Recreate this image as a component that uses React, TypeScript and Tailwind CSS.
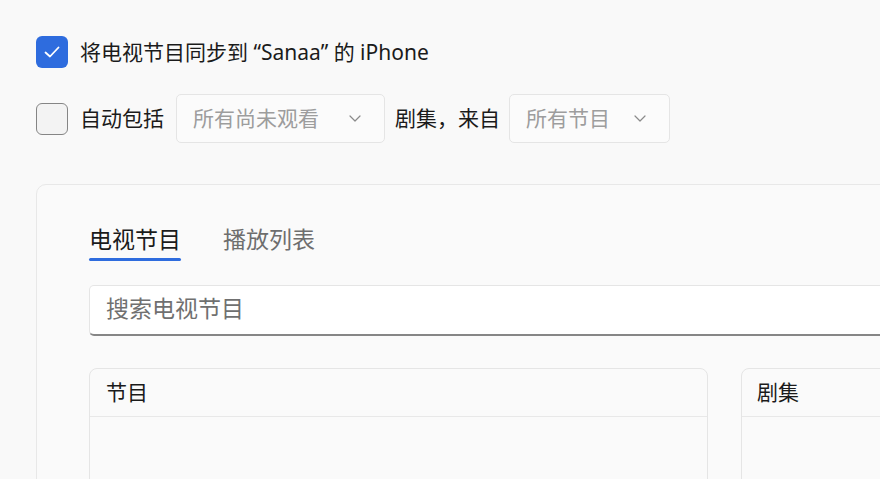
import React from 'react';

// Sync settings pane: checkbox rows, dropdowns, and the tabbed picker card
function Chevron() {
  return (
    <svg width="12" height="7" viewBox="0 0 12 7" fill="none">
      <path d="M1 1l5 5 5-5" stroke="#8a8a8a" strokeWidth="1.2" strokeLinecap="round" strokeLinejoin="round" />
    </svg>
  );
}

function Dropdown({ label, width }: { label: string; width: string }) {
  return (
    <div
      className={`${width} h-[49px] rounded-[5px] border border-[#e5e5e5] bg-[#fbfbfb] flex items-center justify-between pl-[16px] pr-[23px] text-[21px] text-[#9d9d9d]`}
    >
      <span>{label}</span>
      <Chevron />
    </div>
  );
}

export default function App() {
  return (
    <div className="w-[880px] h-[479px] overflow-hidden bg-[#f9f9f9] pl-[36px] pt-[36px] font-['Noto_Sans','Noto_Sans_CJK_SC',sans-serif] text-[#1b1b1b]">
      {/* sync toggle */}
      <div className="flex items-center h-[32px]">
        <div className="w-[32px] h-[32px] rounded-[6px] bg-[#2e6cde] flex items-center justify-center">
          <svg width="16" height="12" viewBox="0 0 16 12" fill="none">
            <path d="M1.5 6.5l4.5 4 8.5-9" stroke="#fff" strokeWidth="1.8" strokeLinecap="round" strokeLinejoin="round" />
          </svg>
        </div>
        <span className="ml-[12px] text-[21px] leading-[30px]">将电视节目同步到 “Sanaa” 的 iPhone</span>
      </div>

      {/* auto include row */}
      <div className="mt-[26px] flex items-center h-[49px] text-[21px]">
        <div className="w-[32px] h-[32px] rounded-[6px] border border-[#858585] bg-[#f3f3f3]" />
        <span className="ml-[12px]">自动包括</span>
        <div className="ml-[12px]">
          <Dropdown label="所有尚未观看" width="w-[209px]" />
        </div>
        <span className="ml-[10px]">剧集，来自</span>
        <div className="ml-[9px]">
          <Dropdown label="所有节目" width="w-[161px]" />
        </div>
      </div>

      {/* picker card */}
      <div className="mt-[41px] w-[900px] h-[320px] rounded-[10px] border border-[#e8e8e8] bg-[#fafafa] pt-[39px] pl-[52px]">
        <div className="flex gap-[42px] text-[23px] leading-[30px]">
          <div className="flex flex-col">
            <span>电视节目</span>
            <div className="mt-[4px] h-[3px] rounded-full bg-[#2e6cde]" />
          </div>
          <span className="text-[#6e6e6e]">播放列表</span>
        </div>

        <div className="mt-[24px] w-[900px] h-[51px] rounded-[5px] border border-[#e5e5e5] border-b-[2px] border-b-[#868686] bg-white flex items-center pl-[16px] pb-[3px] text-[23px] text-[#707070]">
          搜索电视节目
        </div>

        <div className="mt-[32px] flex gap-[33px]">
          <div className="w-[619px] shrink-0 h-[200px] rounded-[8px] border border-[#e5e5e5]">
            <div className="h-[48px] border-b border-[#e8e8e8] flex items-center pl-[16px] text-[21px]">节目</div>
          </div>
          <div className="w-[300px] shrink-0 h-[200px] rounded-[8px] border border-[#e5e5e5]">
            <div className="h-[48px] border-b border-[#e8e8e8] flex items-center pl-[15px] text-[21px]">剧集</div>
          </div>
        </div>
      </div>
    </div>
  );
}
